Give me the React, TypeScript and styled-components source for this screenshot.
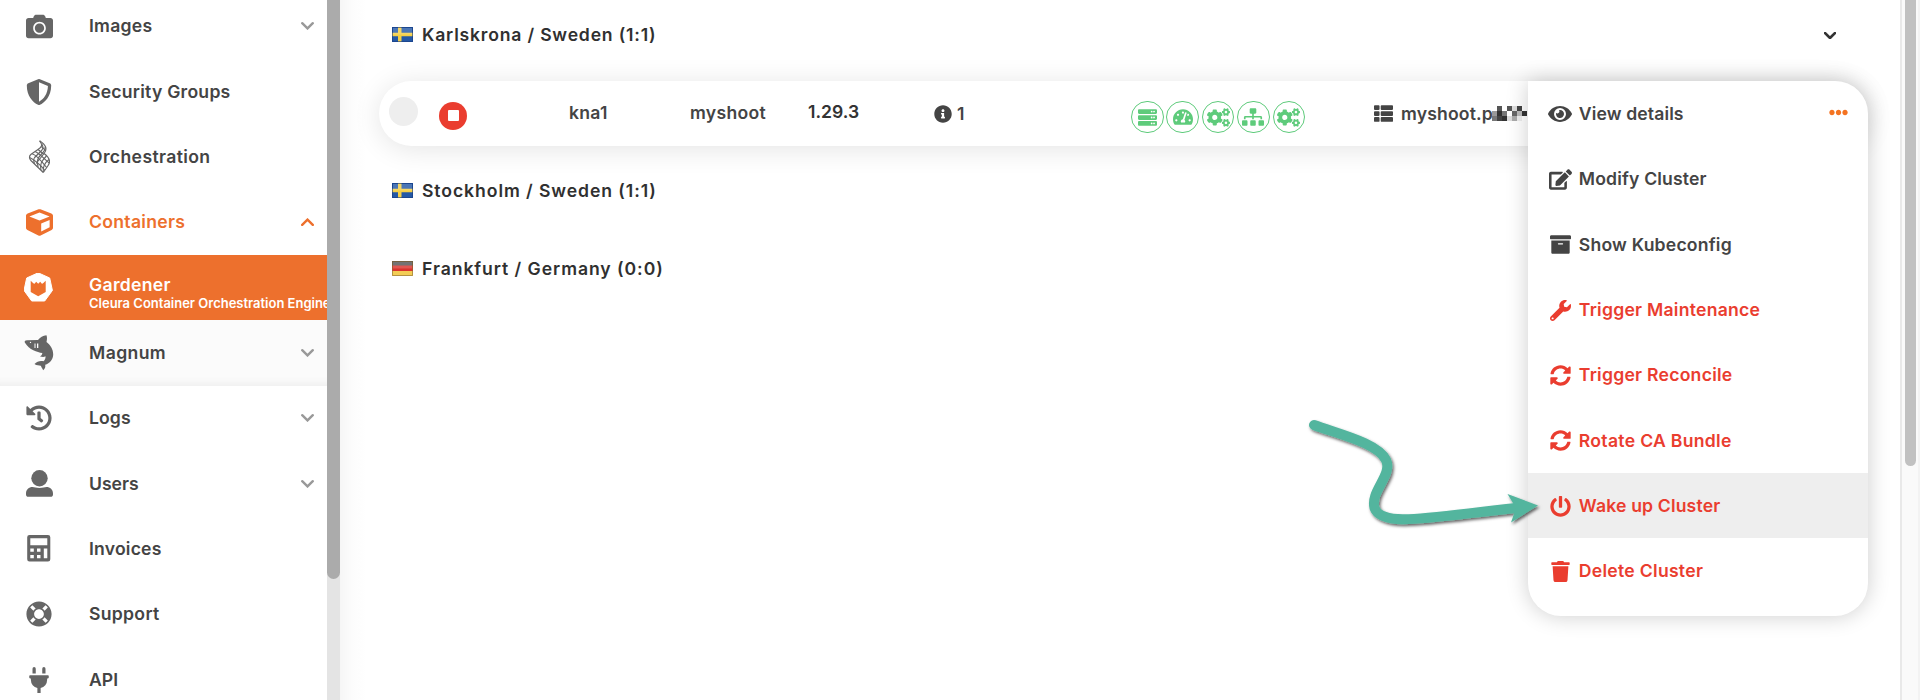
import React from "react";
import styled, { createGlobalStyle, css } from "styled-components";
import {
  FaCamera, FaShieldAlt, FaCube, FaHistory, FaLifeRing, FaPlug, FaServer, FaTachometerAlt, FaCogs,
  FaSitemap, FaThList, FaInfoCircle, FaEye, FaEdit, FaArchive, FaWrench, FaSyncAlt, FaPowerOff, FaTrash, FaEllipsisH,
} from "react-icons/fa";

const Global = createGlobalStyle`
  * { box-sizing: border-box; }
  body { margin: 0; overflow: hidden; background: #fff; font-family: Inter, "Liberation Sans", sans-serif; font-weight: 600; }
`;

const orange = "#ed702d";
const red = "#ea3d2f";
const green = "#5ecb7b";

const Page = styled.div`display: flex; width: 1920px; height: 700px; overflow: hidden; background: #fff; position: relative;`;
const Sidebar = styled.nav`width: 327px; flex: none; overflow: hidden; height: 700px;`;
const NavList = styled.div`margin-top: -6.4px; display: flex; flex-direction: column;`;
const NavRow = styled.div<{ $tone?: "open" | "active" | "sub" }>`
  height: 65.33px; flex: none; display: flex; align-items: center; padding-left: 22px; color: #444; font-size: 17.6px;
  ${p => p.$tone === "open" && css`color: ${orange};`}
  ${p => p.$tone === "active" && css`color: #fff; background: ${orange};`}
  ${p => p.$tone === "sub" && css`background: #fbfbfb; box-shadow: inset 0 -11px 9px -9px #ececec;`}
`;
const NavIcon = styled.span<{ $tone?: string }>`
  width: 34px; flex: none; display: flex; justify-content: center; margin-right: 33px;
  color: ${p => (p.$tone === "open" ? orange : p.$tone === "active" ? "#fff" : "#666")};
  svg { display: block; }
`;
const NavLabel = styled.span<{ $ls?: number }>`
  white-space: nowrap; line-height: 20px; letter-spacing: ${p => p.$ls ?? 0}px; flex: none;
`;
const NavText = styled.div`display: flex; flex-direction: column; padding-top: 11px; width: 238px;`;
const NavSub = styled.span`font-size: 13px; line-height: 17px; white-space: nowrap; letter-spacing: -0.01px;`;
const NavChevron = styled.span<{ $up?: boolean }>`
  margin-left: auto; margin-right: 13.5px; display: flex; color: ${p => (p.$up ? orange : "#999")};
`;

const SideScroll = styled.div`width: 13px; flex: none; background: #e4e4e4;`;
const SideThumb = styled.div`height: 579px; border-radius: 0 0 7px 7px; background: #ababab;`;

const Main = styled.main`
  flex: 1; padding: 1px 0 0 39px;
  background: linear-gradient(90deg, #f6f6f6 0, #fcfcfc 12px, #fff 26px);
`;
const Region = styled.div<{ $h?: number }>`
  display: flex; align-items: center; height: ${p => p.$h ?? 78.4}px; padding: 0 0 0 13px; color: #303030; font-size: 17.6px;
`;
const Regions = styled.div`padding-top: 5px;`;
const RegionName = styled.span<{ $ls: number }>`margin-left: 9px; letter-spacing: ${p => p.$ls}px; white-space: nowrap;`;
const RegionChevron = styled.span`margin-left: auto; margin-right: 64px; padding-top: 3px; display: flex; color: #333;`;

const ClusterRow = styled.div`
  margin: 14px 0 0; height: 65px; width: 1489px; border-radius: 33px; background: #fff;
  box-shadow: 0 3px 28px rgba(0,0,0,.11); display: flex; align-items: center; color: #444; font-size: 17.6px;
`;
const Cell = styled.div<{ $w: number; $ls?: number; $dy?: number; $dark?: boolean }>`
  width: ${p => p.$w}px; flex: none; display: flex; align-items: center; white-space: nowrap; color: ${p => (p.$dark ? "#333" : "#444")};
  letter-spacing: ${p => p.$ls ?? 0}px; padding-bottom: ${p => p.$dy ?? 2}px; line-height: 24px;
`;
const Dot = styled.span`width: 29px; height: 29px; border-radius: 50%; background: #eee; margin-left: 9.5px;`;
const Stop = styled.span`
  width: 28px; height: 28px; margin-top: 4px; border-radius: 50%; background: ${red}; display: flex; align-items: center; justify-content: center;
  &::after { content: ""; width: 11px; height: 11px; background: #fff; border-radius: 1px; }
`;
const Badges = styled.div`display: flex; gap: 2.9px; padding-top: 7px; width: 243px; flex: none;`;
const Badge = styled.span`
  width: 32.5px; height: 32.5px; border: 1.2px solid ${green}; border-radius: 50%; color: ${green};
  display: flex; align-items: center; justify-content: center;
`;
const Shoot = styled.span<{ $gap: number }>`margin-left: ${p => p.$gap}px;`;
const Mosaic = styled.span`display: grid; grid-template-columns: repeat(7, 5px); grid-auto-rows: 5px; margin: -1px 0 0 -1px;`;
const Tile = styled.i<{ $c: string }>`background: ${p => p.$c};`;

const Menu = styled.div`
  position: absolute; left: 1528px; top: 81px; width: 340px; height: 535px; background: #fff;
  border-radius: 0 33px 33px 33px; box-shadow: 0 0 22px rgba(0,0,0,.2); font-size: 17.6px;
`;
const MenuItem = styled.div<{ $danger?: boolean; $hover?: boolean }>`
  height: 65.33px; display: flex; align-items: center; padding-left: 20px;
  color: ${p => (p.$danger ? red : "#444")}; background: ${p => (p.$hover ? "#eee" : "transparent")};
`;
const MenuIcon = styled.span`width: 24px; display: flex; justify-content: center; margin: 1px 6.8px 0 0;`;
const MenuLabel = styled.span<{ $ls: number }>`letter-spacing: ${p => p.$ls}px; white-space: nowrap;`;
const More = styled.span`margin: -2px 20px 0 auto; display: flex; color: #f47321;`;

const PageScroll = styled.div`width: 20px; flex: none; background: #fafafa; border-left: 2px solid #e9e9e9; border-right: 2px solid #f3f3f3; padding-left: 3px;`;
const PageThumb = styled.div`width: 11px; height: 466px; background: #c1c1c1; border-radius: 0 0 6px 6px;`;
const ArrowLayer = styled.svg`position: absolute; left: 1290px; top: 400px; overflow: visible;`;

const Chevron = ({ up, w = 13, sw = 2.4 }: { up?: boolean; w?: number; sw?: number }) => (
  <svg width={w} height={w * 0.62} viewBox="0 0 13 8" fill="none" stroke="currentColor" strokeWidth={sw} strokeLinecap="round" strokeLinejoin="miter">
    <path d={up ? "M1.2 6.8 6.5 1.6 11.8 6.8" : "M1.2 1.2 6.5 6.4 11.8 1.2"} />
  </svg>
);

const Person = () => (
  <svg width="27" height="27" viewBox="0 0 27 27" fill="currentColor">
    <circle cx="13.5" cy="8.3" r="8.2" />
    <path d="M0 23.5c0-4 3-6.5 6.5-6.5 2 0 3.5 1 7 1s5-1 7-1c3.5 0 6.5 2.5 6.5 6.5v1c0 1.5-1 2.3-2.3 2.3H2.3C1 26.8 0 26 0 24.5z" />
  </svg>
);
const Calculator = () => (
  <svg width="24" height="27" viewBox="0 0 24 27" fill="currentColor" fillRule="evenodd">
    <path d="M2.5 0h18.5a2.3 2.3 0 0 1 2.3 2.3v22a2.3 2.3 0 0 1-2.3 2.3H2.5A2.3 2.3 0 0 1 .2 24.3v-22A2.3 2.3 0 0 1 2.5 0zM3.3 3.3v7h17v-7zM3.3 13.5v3.3h3.5v-3.3zM10 13.5v3.3h3.5v-3.3zM16.8 13.5v9.7h3.5v-9.7zM3.3 20v3.2h3.5V20zM10 20v3.2h3.5V20z" />
  </svg>
);
const Heat = () => (
  <svg width="22" height="33" viewBox="-0.6 0 22 33" fill="none" stroke="currentColor" strokeWidth="1.15">
    <path d="M11 .8C14 4.5 14 7 9 9.8L2.5 14.3C.2 16 .5 18.5 2.3 20.5L14.7 32.5" />
    <path d="M11 .8C17.5 5 19 9 15.5 13.5 21.5 18 22 22 19.5 25.5L14.7 32.5" />
    <path d="M15.5 13.5 7.5 23.5M13 3.5C15.5 7.5 14.5 9.5 11 12.5L6 17.5C4.5 19.5 4.8 21 6 23.8M16.5 6.8C17 9 15.5 11.5 12.5 14.5 8.5 18.5 8 21.5 9.5 27M17.8 16C13 21 11 24 12.3 30M20.3 19.5C16 23 14 26 14.7 32" />
    <path d="M12.8 6.5 17 10.5M9.5 9.5 14.8 14M6.5 11.5C10 13 15 18 20.5 23M3.5 13.7C8 15 13 21 18 27.5M1 17.5C6 20 11 24 16 30" />
  </svg>
);
const GardenerLogo = () => (
  <svg width="30" height="30" viewBox="0.8 1 30 30">
    <path fill="#fff" d="M15 .8 26.5 6 29.2 18.4 21.5 29H8.5L.8 18.4 3.5 6z" strokeLinejoin="round" stroke="#fff" strokeWidth="1" />
    <path fill={orange} d="M7.5 8.8C9 10 10.5 12 11.3 11.8L13 9.8 15 11.8 17 9.8 18.7 11.8C19.5 12 21 10 22.5 8.8V20L15 24.3 7.5 20z" />
  </svg>
);
const Shark = () => (
  <svg width="30" height="36" viewBox="0 0 30 36">
    <path fill="currentColor" d="M.8 7.5C.2 6 1.5 5.2 3 5.2L14 4.9c2-2.4 5-4.4 8.5-4.7.8 2.5.5 4.5 0 6.8 4 3 6.8 7.5 6.7 12.5 0 5-3.5 8.8-8 10.3.5 2-.2 4-2 5.5-1-2-2-3.5-2.5-4.5-1.5-.8-4 0-6.2-1.8 2.5-2.7 6-3.7 9-2.7 1.5-1.3 2.2-3 2-5-1.5 1-3 .8-5.5.3 1.5-1 2.3-2.2 2.3-3.6-5-.7-13-3-17.5-10.5z" />
    <g fill="#fff"><circle cx="6.5" cy="7.4" r=".7" /><path d="M10.5 8.5h1v4.5h-1zM13 8.5h1.3v4.5H13z" /></g>
  </svg>
);
const Flag = ({ de }: { de?: boolean }) => (
  <svg width="21" height="15" viewBox="0 0 21 15">
    {de ? (
      <g><path fill="#555" d="M0 0h21v5H0z" /><path fill="#d9322d" d="M0 4.5h21V10H0z" /><path fill="#f3cd55" d="M0 10h21v5H0z" /></g>
    ) : (
      <g><path fill="#2458a5" d="M0 0h21v15H0z" /><path fill="#f5cf45" d="M6 0h3.500v5.800H21v3.400H9.500V15H6V9.200H0V5.800h6z" /></g>
    )}
    <path fill="#fff" opacity=".18" d="M1 1h19v6.5H1z" />
    <path fill="none" stroke={de ? "#8a6a35" : "#163a80"} strokeOpacity=".6" d="M.5.5h20v14H.5z" />
  </svg>
);

type Item = { label: string; icon: React.ReactNode; chev?: boolean; tone?: "open" | "active" | "sub"; sub?: string; ls?: number };
const nav: Item[] = [
  { label: "Images", icon: <FaCamera size={27} />, chev: true, ls: 0.25 },
  { label: "Security Groups", icon: <FaShieldAlt size={26} />, ls: 0.24 },
  { label: "Orchestration", icon: <Heat />, ls: 0.37 },
  { label: "Containers", icon: <FaCube size={27} />, chev: true, tone: "open", ls: 0.3 },
  { label: "Gardener", icon: <GardenerLogo />, tone: "active", sub: "Cleura Container Orchestration Engine", ls: 0.3 },
  { label: "Magnum", icon: <Shark />, chev: true, tone: "sub", ls: 0.4 },
  { label: "Logs", icon: <FaHistory size={26} />, chev: true, ls: 0.1 },
  { label: "Users", icon: <Person />, chev: true },
  { label: "Invoices", icon: <Calculator />, ls: 0.2 },
  { label: "Support", icon: <FaLifeRing size={26} />, ls: 0.3 },
  { label: "API", icon: <FaPlug size={26} /> },
];
const menu = [
  { label: "View details", icon: <FaEye size={24} />, ls: 0.12 },
  { label: "Modify Cluster", icon: <FaEdit size={23} />, ls: 0.17 },
  { label: "Show Kubeconfig", icon: <FaArchive size={21} />, ls: 0.2 },
  { label: "Trigger Maintenance", icon: <FaWrench size={21} />, danger: true, ls: 0.25 },
  { label: "Trigger Reconcile", icon: <FaSyncAlt size={21} />, danger: true, ls: 0.25 },
  { label: "Rotate CA Bundle", icon: <FaSyncAlt size={21} />, danger: true, ls: 0.3 },
  { label: "Wake up Cluster", icon: <FaPowerOff size={21} />, danger: true, hover: true, ls: 0.16 },
  { label: "Delete Cluster", icon: <FaTrash size={21} />, danger: true, ls: 0.28 },
];
const tiles = "#fff #555 #fff #555 #ddd #444 #fff #999 #333 #777 #fff #666 #bbb #333 #777 #444 #333 #ddd #aaa #eee #fff".split(" ");

export default function App() {
  return (
    <Page>
      <Global />
      <Sidebar>
        <NavList>
          {nav.map(n => (
            <NavRow key={n.label} $tone={n.tone}>
              <NavIcon $tone={n.tone}>{n.icon}</NavIcon>
              {n.sub ? (
                <NavText><NavLabel $ls={n.ls}>{n.label}</NavLabel><NavSub>{n.sub}</NavSub></NavText>
              ) : <NavLabel $ls={n.ls}>{n.label}</NavLabel>}
              {n.chev && <NavChevron $up={n.tone === "open"}><Chevron up={n.tone === "open"} /></NavChevron>}
            </NavRow>
          ))}
        </NavList>
      </Sidebar>
      <SideScroll><SideThumb /></SideScroll>
      <Main>
        <Region $h={66}><Flag /><RegionName $ls={0.8}>Karlskrona / Sweden (1:1)</RegionName><RegionChevron><Chevron w={12} sw={3} /></RegionChevron></Region>
        <ClusterRow>
          <Cell $w={60} $dy={4}><Dot /></Cell>
          <Cell $w={130} $dy={0}><Stop /></Cell>
          <Cell $w={121} $ls={0.25}>kna1</Cell>
          <Cell $w={118} $ls={0.27}>myshoot</Cell>
          <Cell $w={126} $dy={3} $dark>1.29.3</Cell>
          <Cell $w={197} $dy={0}><FaInfoCircle size={18} /><Shoot $gap={5}>1</Shoot></Cell>
          <Badges>
            <Badge><FaServer size={19} /></Badge>
            <Badge><FaTachometerAlt size={20} /></Badge>
            <Badge><FaCogs size={23} /></Badge>
            <Badge><FaSitemap size={22} /></Badge>
            <Badge><FaCogs size={23} /></Badge>
          </Badges>
          <Cell $w={200} $dy={0} $ls={0.15}><FaThList size={19} /><Shoot $gap={8}>myshoot.p</Shoot><Mosaic>{tiles.map((c, i) => <Tile key={i} $c={c} />)}</Mosaic></Cell>
        </ClusterRow>
        <Regions>
          <Region><Flag /><RegionName $ls={0.92}>Stockholm / Sweden (1:1)</RegionName></Region>
          <Region><Flag de /><RegionName $ls={0.94}>Frankfurt / Germany (0:0)</RegionName></Region>
        </Regions>
      </Main>
      <PageScroll><PageThumb /></PageScroll>
      <Menu>
        {menu.map((m, i) => (
          <MenuItem key={m.label} $danger={m.danger} $hover={m.hover}>
            <MenuIcon>{m.icon}</MenuIcon><MenuLabel $ls={m.ls}>{m.label}</MenuLabel>
            {i === 0 && <More><FaEllipsisH size={19} /></More>}
          </MenuItem>
        ))}
      </Menu>
      <ArrowLayer width="270" height="150" viewBox="0 0 270 150">
        <defs><filter id="drop" x="-10%" y="-10%" width="125%" height="130%"><feDropShadow dx="1.5" dy="2" stdDeviation="1.5" floodOpacity=".6" /></filter></defs>
        <g filter="url(#drop)">
          <path d="M24 25C48 34 88 43 96 60 103 75 80 91 84.5 108 92 128 140 117 226 108" fill="none" stroke="#53b59e" strokeWidth="10" strokeLinecap="round" />
          <path fill="#53b59e" d="M217.5 94 248 105.5 221 122.5 226 108z" />
        </g>
      </ArrowLayer>
    </Page>
  );
}
